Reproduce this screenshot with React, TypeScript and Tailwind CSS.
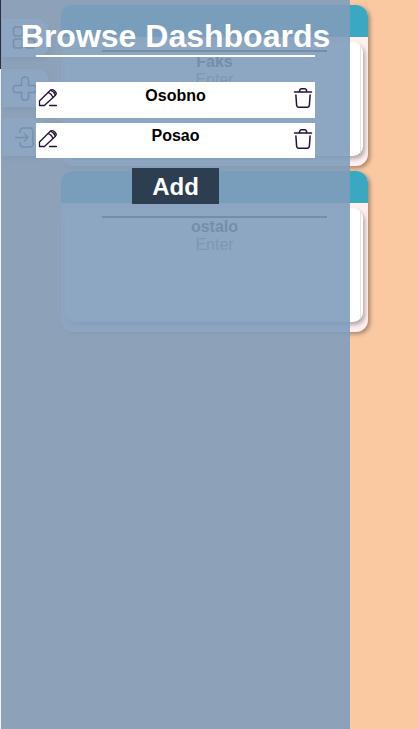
import React from "react";

function Pencil() {
  return (
    <svg width="20" height="20" viewBox="0 0 20 20" fill="none" stroke="#231136" strokeWidth="1.3" strokeLinejoin="round" strokeLinecap="round" className="block">
      <path d="M1.5 17.5V13L12.3 2.3Q14.2.8 16.2 2.4L17.4 3.7Q19 5.4 17.4 7.2L6.4 17.5Z" />
      <path d="M10.2 4.4Q13.4 5.8 15 9.3M12.6 2.2Q16 3.6 17.3 7M11.6 17.5H18.4" />
    </svg>
  );
}

function Trash() {
  return (
    <svg width="20" height="22" viewBox="0 0 20 22" fill="none" stroke="#231136" strokeWidth="1.5" strokeLinejoin="round" strokeLinecap="round" className="-mt-px block">
      <path d="M1.5 5H18.5M6.3 4.8L6.8 3Q7.2 1.8 8.4 1.8H11.8Q13 1.8 13.4 3L13.8 4.8" />
      <path d="M2.9 8 3.6 18Q3.9 20.2 5.8 20.2H14.2Q16.1 20.2 16.4 18L17.1 8" />
    </svg>
  );
}

function Card({ title, className = "" }: { title: string; className?: string }) {
  return (
    <section className="h-[161px] w-[307px] overflow-hidden rounded-xl bg-[#ffefef] shadow-[2px_2px_4px_rgba(0,0,0,0.35)]">
      <div className="h-8 bg-[#3ba8c2]" />
      <div className="mt-[5px] mr-[5px] ml-1 h-[114px] overflow-hidden rounded-[10px] bg-white shadow-[2px_3px_4px_rgba(0,0,0,0.3)]">
        <div className="mr-[2px] h-full border-r border-[#e2e2e2] pt-2 text-center text-base leading-[18px]">
          <div className="ml-[37px] h-[2px] w-[225px] bg-black" />
          <div className={"pl-1 font-bold text-black " + className}>{title}</div>
          <div className="pl-1 text-[#606060]">Enter</div>
        </div>
      </div>
    </section>
  );
}

function SideButton({ children }: { children: React.ReactNode }) {
  return (
    <div className="flex h-[38px] w-[47px] items-center rounded-r-xl bg-white pl-[10px] shadow-[2px_3px_4px_rgba(0,0,0,0.3)]">
      <svg width="25" height="26" viewBox="0 0 25 26" fill="none" stroke="#231136" strokeWidth="1.5" strokeLinecap="round" strokeLinejoin="round">
        {children}
      </svg>
    </div>
  );
}

function Row({ name, className, textClassName }: { name: string; className: string; textClassName: string }) {
  return (
    <div className={"flex w-[279px] justify-between bg-white px-[2px] pt-[6px] " + className}>
      <Pencil />
      <span className={"text-base leading-[18px] font-bold text-black " + textClassName}>{name}</span>
      <Trash />
    </div>
  );
}

export default function App() {
  return (
    <main className="relative flex h-[729px] w-[418px] overflow-hidden bg-[#fac9a1] font-['Liberation_Sans',Arial,sans-serif]">
      <div className="w-px shrink-0 bg-[#f4f2f2]">
        <div className="h-[69px] bg-[#2b3040]" />
      </div>
      <nav className="flex w-[60px] shrink-0 flex-col pt-[19px] pl-px">
        <SideButton>
          <rect x="1.5" y="2" width="9" height="9" rx="2.5" />
          <rect x="13.5" y="2" width="9" height="9" rx="2.5" />
          <rect x="1.5" y="14" width="9" height="9" rx="2.5" />
          <rect x="13.5" y="14" width="9" height="9" rx="2.5" />
        </SideButton>
        <div className="h-3" />
        <SideButton>
          <path d="M9.5 10.5V6Q9.5 2 13 2T16.5 6V10.5H21Q24.3 10.5 24.3 14T21 17.5H16.5V21.5Q16.5 25.3 13 25.3T9.5 21.5V17.5H4.5Q1 17.5 1 14T4.5 10.5Z" />
        </SideButton>
        <div className="h-[11px]" />
        <SideButton>
          <path d="M8 8.5V7.5Q8 4 11.5 4H17.5Q21 4 21 7.5V19.5Q21 23 17.5 23H11.5Q8 23 8 19.5V18.5M3.5 13.5H16M12.5 10 16 13.5 12.5 17" />
        </SideButton>
      </nav>
      <div className="flex flex-col gap-[5px] pt-[5px]">
        <Card title="Faks" className="pt-px" />
        <Card title="ostalo" />
      </div>
      <aside className="absolute top-0 left-px flex h-full w-[349px] flex-col items-center bg-[#819cbb]/90">
        <h1 className="mt-[18px] flex w-[279px] justify-center border-b-2 border-white pb-px text-[32px] leading-9 font-bold whitespace-nowrap text-white">
          Browse Dashboards
        </h1>
        <div className="mt-[25px] flex flex-col gap-[5px]">
          <Row name="Osobno" className="h-9" textClassName="-mt-px" />
          <Row name="Posao" className="h-[35px]" textClassName="-mt-[2px]" />
        </div>
        <button className="mt-[10px] h-9 w-[87px] bg-[#2c3e50] text-2xl leading-[37px] font-bold text-white">Add</button>
      </aside>
    </main>
  );
}
